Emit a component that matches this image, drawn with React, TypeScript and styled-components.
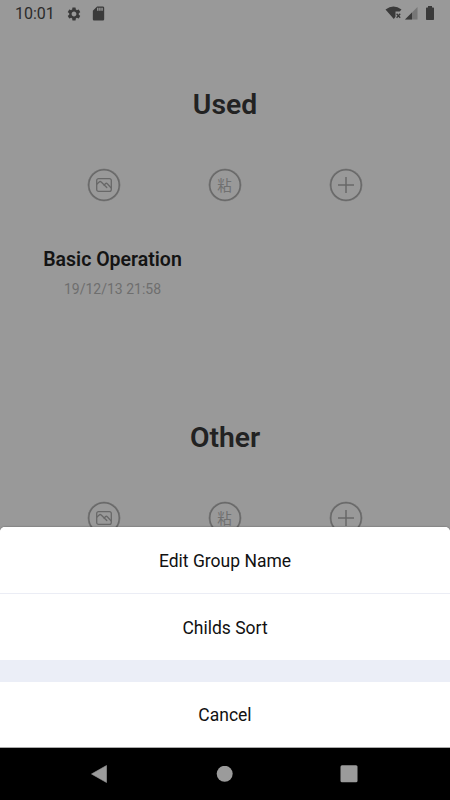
import React from "react";
import styled, { createGlobalStyle } from "styled-components";
import { MdSettings, MdSdCard } from "react-icons/md";

const GlobalStyle = createGlobalStyle`
  * { box-sizing: border-box; }
  body { margin: 0; background: #999; font-family: Roboto, "Noto Sans CJK SC", sans-serif; }
`;

const Screen = styled.div`
  position: relative;
  display: flex;
  flex-direction: column;
  width: 450px;
  height: 800px;
  overflow: hidden;
  background: #999;
`;

const StatusBar = styled.header`
  display: flex;
  align-items: center;
  flex: none;
  height: 28px;
  padding: 0 15px;
  color: #3a3a3a;
  svg { display: block; flex: none; }
`;

const Clock = styled.span`
  width: 51px;
  font-size: 16px;
  line-height: 28px;
  color: #2b2b2b;
`;

const StatusIcons = styled.div<{ $right?: boolean }>`
  display: flex;
  align-items: center;
  gap: ${(p) => (p.$right ? "0" : "8px")};
  margin-left: ${(p) => (p.$right ? "auto" : "0")};
  margin-top: ${(p) => (p.$right ? "-2px" : "-1px")};
`;

const Content = styled.main`
  display: flex;
  flex-direction: column;
  flex: 1;
  min-height: 0;
  overflow: hidden;
`;

const Group = styled.section`
  flex: none;
  height: 333px;
  padding-top: 57px;
`;

const GroupTitle = styled.h2`
  margin: 0;
  height: 40px;
  line-height: 40px;
  font-size: 28.3px;
  font-weight: 600;
  text-align: center;
  color: #222;
`;

const Actions = styled.div`
  display: flex;
  justify-content: space-between;
  margin-top: 44px;
  padding: 0 88px;
`;

const RoundButton = styled.button`
  display: flex;
  align-items: center;
  justify-content: center;
  width: 32px;
  height: 32px;
  padding: 0;
  border: 0;
  border-radius: 50%;
  box-shadow: inset 0 0 0 1.5px #686868, 0 0 0 0.3px #686868;
  background: transparent;
  color: #707070;
  font: 400 14.5px/20px "Noto Sans CJK SC", sans-serif;
  svg { display: block; flex: none; }
  &:nth-child(2) { margin-left: -1px; }
`;

const Item = styled.article`
  width: 225px;
  margin-top: 45px;
  text-align: center;
`;

const ItemName = styled.h3`
  margin: 0;
  height: 28px;
  font-size: 19.5px;
  line-height: 28px;
  font-weight: 600;
  color: #141414;
`;

const ItemDate = styled.time`
  display: block;
  margin-top: 5px;
  font-size: 14px;
  line-height: 20px;
  color: #6e6e6e;
`;

const Sheet = styled.div`
  position: absolute;
  left: 0;
  right: 0;
  bottom: 52px;
  display: flex;
  flex-direction: column;
  height: 221px;
  background: #fff;
  border-bottom: 1px solid #aaa;
  border-radius: 5px 5px 0 0;
  overflow: hidden;
  box-shadow: 0 0 2px rgba(0, 0, 0, 0.4);
`;

const SheetOption = styled.button<{ $divided?: boolean; $height: number }>`
  flex: none;
  height: ${(p) => p.$height}px;
  padding: 1px 0 0;
  border: 0;
  border-bottom: ${(p) => (p.$divided ? "1px solid #ebedf5" : "0")};
  background: #fff;
  color: #111;
  font: 400 17.5px/22px Roboto, sans-serif;
`;

const SheetGap = styled.div`
  flex: none;
  height: 22px;
  background: #ebeef7;
`;

const NavBar = styled.nav`
  display: flex;
  align-items: center;
  justify-content: space-between;
  flex: none;
  height: 52px;
  padding: 0 92px 0 90px;
  background: #000;
  svg { display: block; fill: #9b9b9b; }
`;

function PictureIcon() {
  return (
    <svg width="16" height="14" viewBox="0 0 16 14" fill="none" stroke="#686868" strokeWidth="1.3" strokeLinecap="round" strokeLinejoin="round">
      <rect x="0.7" y="0.7" width="14.6" height="12.6" rx="1.9" />
      <path d="M1 6 3.200 4q1-.9 2 0L10.800 9.500M8 7.300 9.400 5.700q.9-.9 1.900 0L15 9.700" />
    </svg>
  );
}

function PlusIcon() {
  return (
    <svg width="16" height="16" viewBox="0 0 16 16" stroke="#686868" strokeWidth="1.5">
      <path d="M8 0v16M0 8h16" />
    </svg>
  );
}

function GroupHeader({ title }: { title: string }) {
  return (
    <>
      <GroupTitle>{title}</GroupTitle>
      <Actions>
        <RoundButton aria-label="Picture"><PictureIcon /></RoundButton>
        <RoundButton>粘</RoundButton>
        <RoundButton aria-label="Add"><PlusIcon /></RoundButton>
      </Actions>
    </>
  );
}

export default function App() {
  return (
    <Screen>
      <GlobalStyle />
      <StatusBar>
        <Clock>10:01</Clock>
        <StatusIcons>
          <MdSettings size={16} />
          <MdSdCard size={17} />
        </StatusIcons>
        <StatusIcons $right>
          <svg width="50" height="16" viewBox="0 0 50 16" fill="currentColor">
            <path d="M.5 4.500Q8.500-1.500 16.500 4.500L14.700 6.500H10.500V11.800L8.800 14Z" />
            <path d="m11.600 8.700 3.600 4m0-4-3.600 4" stroke="currentColor" strokeWidth="1.300" />
            <path d="M32.500 2V14.500H20Z" fill="#777" />
            <path d="M27 7.500V14.500H20Z" />
            <path d="M43 1h4v1.500h1.300q.7 0 .7.700v11q0 .8-.7.800h-6.600q-.7 0-.7-.8v-11q0-.7.7-.7H43Z" />
          </svg>
        </StatusIcons>
      </StatusBar>
      <Content>
        <Group>
          <GroupHeader title="Used" />
          <Item>
            <ItemName>Basic Operation</ItemName>
            <ItemDate>19/12/13 21:58</ItemDate>
          </Item>
        </Group>
        <Group>
          <GroupHeader title="Other" />
        </Group>
      </Content>
      <Sheet>
        <SheetOption $divided $height={67}>Edit Group Name</SheetOption>
        <SheetOption $height={66}>Childs Sort</SheetOption>
        <SheetGap />
        <SheetOption $height={65}>Cancel</SheetOption>
      </Sheet>
      <NavBar>
        <svg width="18" height="18" viewBox="0 0 18 18"><path d="M1.500 9 16.500 .5V17.500Z" stroke="#9b9b9b" strokeWidth=".6" strokeLinejoin="round" /></svg>
        <svg width="18" height="16" viewBox="0 0 18 16"><circle cx="9.700" cy="7.800" r="8" /></svg>
        <svg width="18" height="18" viewBox="0 0 18 18"><rect x=".5" y=".3" width="17" height="17" rx="1.500" /></svg>
      </NavBar>
    </Screen>
  );
}
